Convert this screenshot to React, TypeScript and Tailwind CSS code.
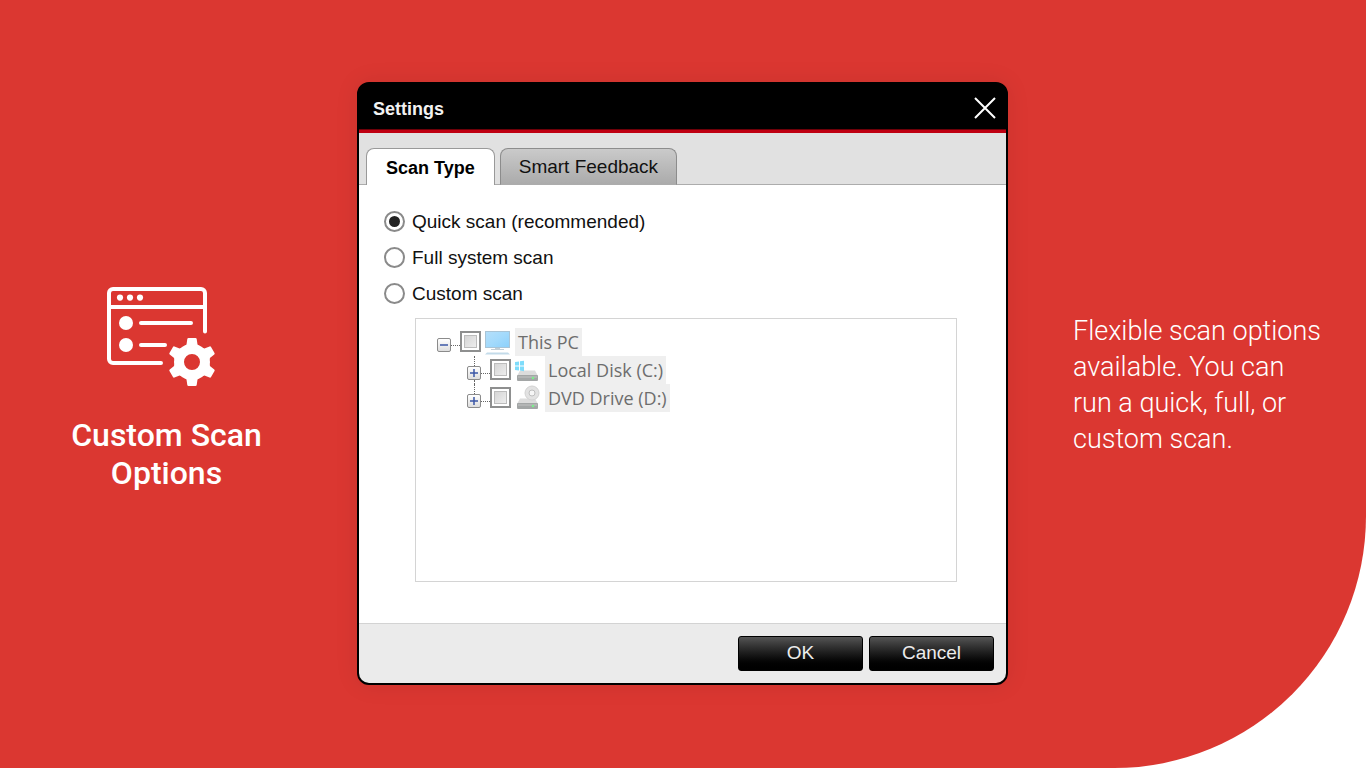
import { useState } from "react";
import type { ReactNode } from "react";

interface TreeRowProps {
  label: string;
  icon: ReactNode;
  open?: boolean;
  root?: boolean;
  last?: boolean;
}

const SCAN_TYPES = [
  { id: "quick", label: "Quick scan (recommended)" },
  { id: "full", label: "Full system scan" },
  { id: "custom", label: "Custom scan" },
];

const GEAR_TEETH = [0, 60, 120, 180, 240, 300];

function ScanOptionsIcon() {
  return (
    <svg width="120" height="100" viewBox="0 0 120 100" fill="none" stroke="#fff" strokeWidth="4" strokeLinecap="round" aria-hidden="true">
      <path d="M98 44.500V6a4 4 0 0 0-4-4H6a4 4 0 0 0-4 4v66a4 4 0 0 0 4 4h48" />
      <path d="M2 20h96" strokeLinecap="butt" />
      <path d="M34 36h50M34 58h24" />
      <g fill="#fff" stroke="none">
        <circle cx="13" cy="10.600" r="3.100" />
        <circle cx="23" cy="10.600" r="3.100" />
        <circle cx="33" cy="10.600" r="3.100" />
        <circle cx="19" cy="36" r="7" />
        <circle cx="19" cy="58" r="7" />
      </g>
      <circle cx="85" cy="75" r="13" strokeWidth="10" />
      {GEAR_TEETH.map((angle) => (
        <path
          key={angle}
          transform={`rotate(${angle} 85 75)`}
          d="M77.500 60 79.500 57.500 80.300 52q.2-1 1.200-1h7q1 0 1.200 1l.8 5.500 2 2.500z"
          fill="#fff"
          stroke="none"
        />
      ))}
    </svg>
  );
}

function MonitorIcon() {
  return (
    <svg width="26" height="28" viewBox="0 0 26 28" aria-hidden="true">
      <defs>
        <linearGradient id="screen" x1="0" y1="0" x2="1" y2="1">
          <stop offset="0" stopColor="#b5dffa" />
          <stop offset="0.500" stopColor="#a3dafc" />
          <stop offset="1" stopColor="#8bd0fb" />
        </linearGradient>
      </defs>
      <rect x="0.500" y="3.500" width="24" height="16" fill="url(#screen)" stroke="#a9c4d6" />
      <path d="M10 20h5v1h4v1H6v-1h4z" fill="#c3cfd6" />
      <path d="M2 24.500h21l2 2H0z" fill="#c3dbea" />
    </svg>
  );
}

function DriveBody() {
  return (
    <>
      <path d="M5 14.500h15l3 5.500H2z" fill="#dcdcdc" />
      <rect x="2" y="19" width="21" height="6" rx="1" fill="#a3a6a6" />
      <rect x="3" y="20" width="19" height="2" fill="#b3b5b5" />
      <circle cx="18" cy="22" r="1.300" fill="#7cee8b" />
    </>
  );
}

function DiskIcon() {
  return (
    <svg width="26" height="26" viewBox="0 0 26 26" aria-hidden="true">
      <DriveBody />
      <path d="M0 6l4-.5v4H0zM5 5.300l4-.5v4.700H5zM0 10.500h4v4L0 14zM5 10.500h4v4.700l-4-.6z" fill="#7edcfb" />
    </svg>
  );
}

function DvdIcon() {
  return (
    <svg width="26" height="26" viewBox="0 0 26 26" aria-hidden="true">
      <DriveBody />
      <circle cx="17" cy="9" r="7" fill="#e2e2e2" stroke="#d2d2d2" />
      <circle cx="17" cy="9" r="3" fill="#f6f6f6" stroke="#bfbfbf" />
    </svg>
  );
}

function Expander({ label, open }: { label: string; open?: boolean }) {
  return (
    <button
      aria-label={open ? `Collapse ${label}` : `Expand ${label}`}
      className="flex size-[14px] shrink-0 items-center justify-center rounded-[2px] border border-[#8b8b8b] bg-linear-to-b from-white to-[#dedede]"
    >
      <svg width="8" height="8" viewBox="0 0 8 8" stroke="#3b57a6" strokeWidth="1.500" aria-hidden="true">
        <path d={open ? "M0 4h8" : "M0 4h8M4 0v8"} />
      </svg>
    </button>
  );
}

function TreeRow({ label, icon, open, root, last }: TreeRowProps) {
  return (
    <div className="flex h-7">
      <div className="flex w-[14px] flex-col items-center">
        <span className={`h-[10px] ${root ? "" : "border-l border-dotted border-[#666]"}`} />
        <Expander label={label} open={open} />
        {!root && !last && <span className="flex-1 border-l border-dotted border-[#666]" />}
      </div>
      <span className="mt-[17px] w-[9px] border-t border-dotted border-[#666]" />
      <label className="flex">
        <input
          type="checkbox"
          className="mt-[3px] size-[21px] appearance-none border-2 border-[#8e8f8f] bg-linear-to-br from-[#cfcfcf] to-[#f4f4f4] bg-clip-content p-[3px] outline-1 -outline-offset-5 outline-[#bcbcbc]"
        />
        <span className="ml-1 w-[30px]">{icon}</span>
        <span className="bg-[#efefef] px-[3px] font-['Open_Sans','Noto_Sans',sans-serif] text-lg leading-7 text-[#6d6d6d]">
          {label}
        </span>
      </label>
    </div>
  );
}

function SettingsDialog() {
  const [scanType, setScanType] = useState("quick");

  return (
    <section
      role="dialog"
      aria-label="Settings"
      className="overflow-hidden rounded-xl border-2 border-black bg-black font-['Liberation_Sans',Arial,sans-serif] text-[19px] text-[#111] shadow-[0_0_24px_rgba(0,0,0,0.08)]"
    >
      <header className="flex h-[45px] items-center justify-between pr-2 pl-[14px]">
        <h2 className="pt-[6px] text-lg font-bold text-[#f2f2f2]">Settings</h2>
        <button aria-label="Close" className="p-px pt-1">
          <svg width="24" height="24" viewBox="0 0 24 24" stroke="#fff" strokeWidth="2" aria-hidden="true">
            <path d="M2 2l20 20M22 2L2 22" />
          </svg>
        </button>
      </header>
      <div className="h-1 border-t border-[#6d0008] bg-[#bf0012]" />

      <div role="tablist" className="flex h-[52px] items-end gap-[5px] bg-[#e1e1e1] pl-[7px] shadow-[inset_0_-1px_0_#acacac]">
        <button role="tab" aria-selected="true" className="h-[37px] rounded-t-lg border border-b-0 border-[#999] bg-white px-[19px] pt-[3px] text-lg font-bold text-black">
          Scan Type
        </button>
        <button role="tab" aria-selected="false" className="h-[37px] rounded-t-lg border border-[#8c8c8c] border-b-[#acacac] bg-linear-to-b from-[#cacaca] to-[#ababab] px-[18px] pt-[3px]">
          Smart Feedback
        </button>
      </div>

      <div className="bg-white pt-[19px] pr-[49px] pb-[41px] pl-[25px]">
        {SCAN_TYPES.map(({ id, label }) => (
          <label key={id} className="flex h-9 items-center gap-[7px]">
            <input
              type="radio"
              name="scan-type"
              checked={scanType === id}
              onChange={() => setScanType(id)}
              className="size-[21px] appearance-none rounded-full border-2 border-[#8a8a8a] bg-white bg-clip-content p-[3px] checked:bg-[#222]"
            />
            <span className="pt-px">{label}</span>
          </label>
        ))}
        <div className="mt-[6px] ml-[31px] min-h-[264px] border border-[#d4d4d4] pt-[9px] pl-[21px]">
          <TreeRow label="This PC" icon={<MonitorIcon />} open root />
          <div className="pl-[30px]">
            <TreeRow label="Local Disk (C:)" icon={<DiskIcon />} />
            <TreeRow label="DVD Drive (D:)" icon={<DvdIcon />} last />
          </div>
        </div>
      </div>

      <footer className="flex justify-end gap-[6px] border-t border-[#d3d3d3] bg-[#ebebeb] py-3 pr-3">
        <button className="h-[35px] w-[125px] rounded-[3px] border border-black bg-linear-to-b from-[#555] to-black text-[#ececec]">
          OK
        </button>
        <button className="h-[35px] w-[125px] rounded-[3px] border border-black bg-linear-to-b from-[#555] to-black text-[#ececec]">
          Cancel
        </button>
      </footer>
    </section>
  );
}

export default function App() {
  return (
    <div className="bg-white">
      <main className="grid min-h-screen grid-cols-[357fr_651fr_358fr] items-center rounded-br-[252px] bg-[#db3731] pb-[2px] font-[Roboto,sans-serif] text-white">
        <div className="flex flex-col items-center gap-[29px] pt-3 pr-6">
          <ScanOptionsIcon />
          <h1 className="max-w-[220px] text-center text-[32px] leading-[38px] font-medium">Custom Scan Options</h1>
        </div>
        <SettingsDialog />
        <p className="pt-1 pr-[38px] pl-[65px] text-[27px] leading-9 font-light">
          Flexible scan options available. You can run a quick, full, or custom scan.
        </p>
      </main>
    </div>
  );
}
